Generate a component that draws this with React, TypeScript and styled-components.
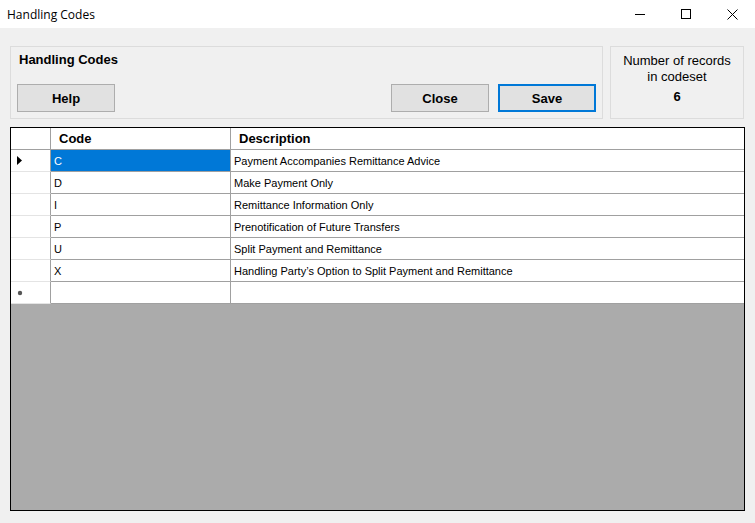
import React from "react";
import styled, { createGlobalStyle } from "styled-components";

const Global = createGlobalStyle`
  html, body { margin: 0; padding: 0; background: #f0f0f0; }
  body { font-family: "Liberation Sans", Arial, sans-serif; }
`;

const Window = styled.div`
  width: 755px; height: 523px; display: flex; flex-direction: column; background: #f0f0f0; overflow: hidden;
`;
const TitleBar = styled.div`
  height: 28px; background: #fff; display: flex; align-items: center; padding-left: 7px;
  font-family: "Open Sans", sans-serif; font-size: 12px; color: #000;
`;
const TitleText = styled.div` flex: 1; `;
const Ctrl = styled.div`
  width: 46px; height: 28px; display: flex; align-items: center; justify-content: center;
`;
const Top = styled.div`
  display: flex; gap: 7px; padding: 18px 11px 0 10px; height: 73px;
`;
const Panel = styled.div`
  border: 1px solid #dcdcdc; box-sizing: border-box; height: 73px;
`;
const MainPanel = styled(Panel)`
  flex: 1; padding: 5px 6px 0 6px; display: flex; flex-direction: column;
`;
const Heading = styled.div` font-weight: bold; font-size: 13px; margin-left: 2px; height: 32px; `;
const BtnRow = styled.div` display: flex; gap: 9px; `;
const Btn = styled.div<{ $focus?: boolean }>`
  width: 98px; height: 28px; box-sizing: border-box; display: flex; align-items: center; justify-content: center;
  background: #e1e1e1; font-weight: bold; font-size: 13px;
  border: ${p => (p.$focus ? "2px solid #0078d7" : "1px solid #adadad")};
`;
const Spacer = styled.div` flex: 1; `;
const CountPanel = styled(Panel)`
  width: 134px; text-align: center; font-size: 13px; line-height: 16px; padding-top: 6px;
`;
const Count = styled.div` font-weight: bold; margin-top: 4px; `;
const Grid = styled.div`
  margin: 8px 10px 12px 10px; flex: 1; border: 1px solid #000; background: #ababab;
  display: flex; flex-direction: column;
`;
const Row = styled.div<{ $head?: boolean }>`
  display: grid; grid-template-columns: 40px 180px 1fr; height: 22px; background: #fff;
  font-size: ${p => (p.$head ? "13px" : "11px")}; font-weight: ${p => (p.$head ? "bold" : "normal")};
`;
const Cell = styled.div<{ $sel?: boolean; $head?: boolean }>`
  border-right: 1px solid #a0a0a0; border-bottom: 1px solid #a0a0a0; display: flex; align-items: center;
  padding-left: ${p => (p.$head ? "8px" : "3px")};
  background: ${p => (p.$sel ? "#0078d7" : "#fff")}; color: ${p => (p.$sel ? "#fff" : "#000")};
  &:last-child { border-right: none; }
`;
const RowHead = styled(Cell)` border-bottom-color: #e4e4e4; justify-content: flex-start; padding-left: 6px; `;

const rows = [
  ["C", "Payment Accompanies Remittance Advice"],
  ["D", "Make Payment Only"],
  ["I", "Remittance Information Only"],
  ["P", "Prenotification of Future Transfers"],
  ["U", "Split Payment and Remittance"],
  ["X", "Handling Party\u2019s Option to Split Payment and Remittance"],
];

export default function App() {
  return (
    <Window>
      <Global />
      <TitleBar>
        <TitleText>Handling Codes</TitleText>
        <Ctrl><svg width="10" height="10"><path d="M0 5.5h10" stroke="#000" /></svg></Ctrl>
        <Ctrl><svg width="10" height="10"><rect x="0.5" y="0.5" width="9" height="9" fill="none" stroke="#000" /></svg></Ctrl>
        <Ctrl><svg width="11" height="11"><path d="M0.5 0.5l10 10M10.5 0.5l-10 10" stroke="#000" /></svg></Ctrl>
      </TitleBar>
      <Top>
        <MainPanel>
          <Heading>Handling Codes</Heading>
          <BtnRow>
            <Btn>Help</Btn>
            <Spacer />
            <Btn>Close</Btn>
            <Btn $focus>Save</Btn>
          </BtnRow>
        </MainPanel>
        <CountPanel>
          Number of records<br />in codeset
          <Count>6</Count>
        </CountPanel>
      </Top>
      <Grid>
        <Row $head>
          <Cell $head />
          <Cell $head>Code</Cell>
          <Cell $head>Description</Cell>
        </Row>
        {rows.map(([c, d], i) => (
          <Row key={c}>
            <RowHead>
              {i === 0 && <svg width="5" height="9"><path d="M0 0l5 4.5L0 9z" fill="#000" /></svg>}
            </RowHead>
            <Cell $sel={i === 0}>{c}</Cell>
            <Cell>{d}</Cell>
          </Row>
        ))}
        <Row>
          <RowHead><svg width="6" height="6"><circle cx="3" cy="3" r="2.2" fill="#555" /></svg></RowHead>
          <Cell />
          <Cell />
        </Row>
      </Grid>
    </Window>
  );
}
